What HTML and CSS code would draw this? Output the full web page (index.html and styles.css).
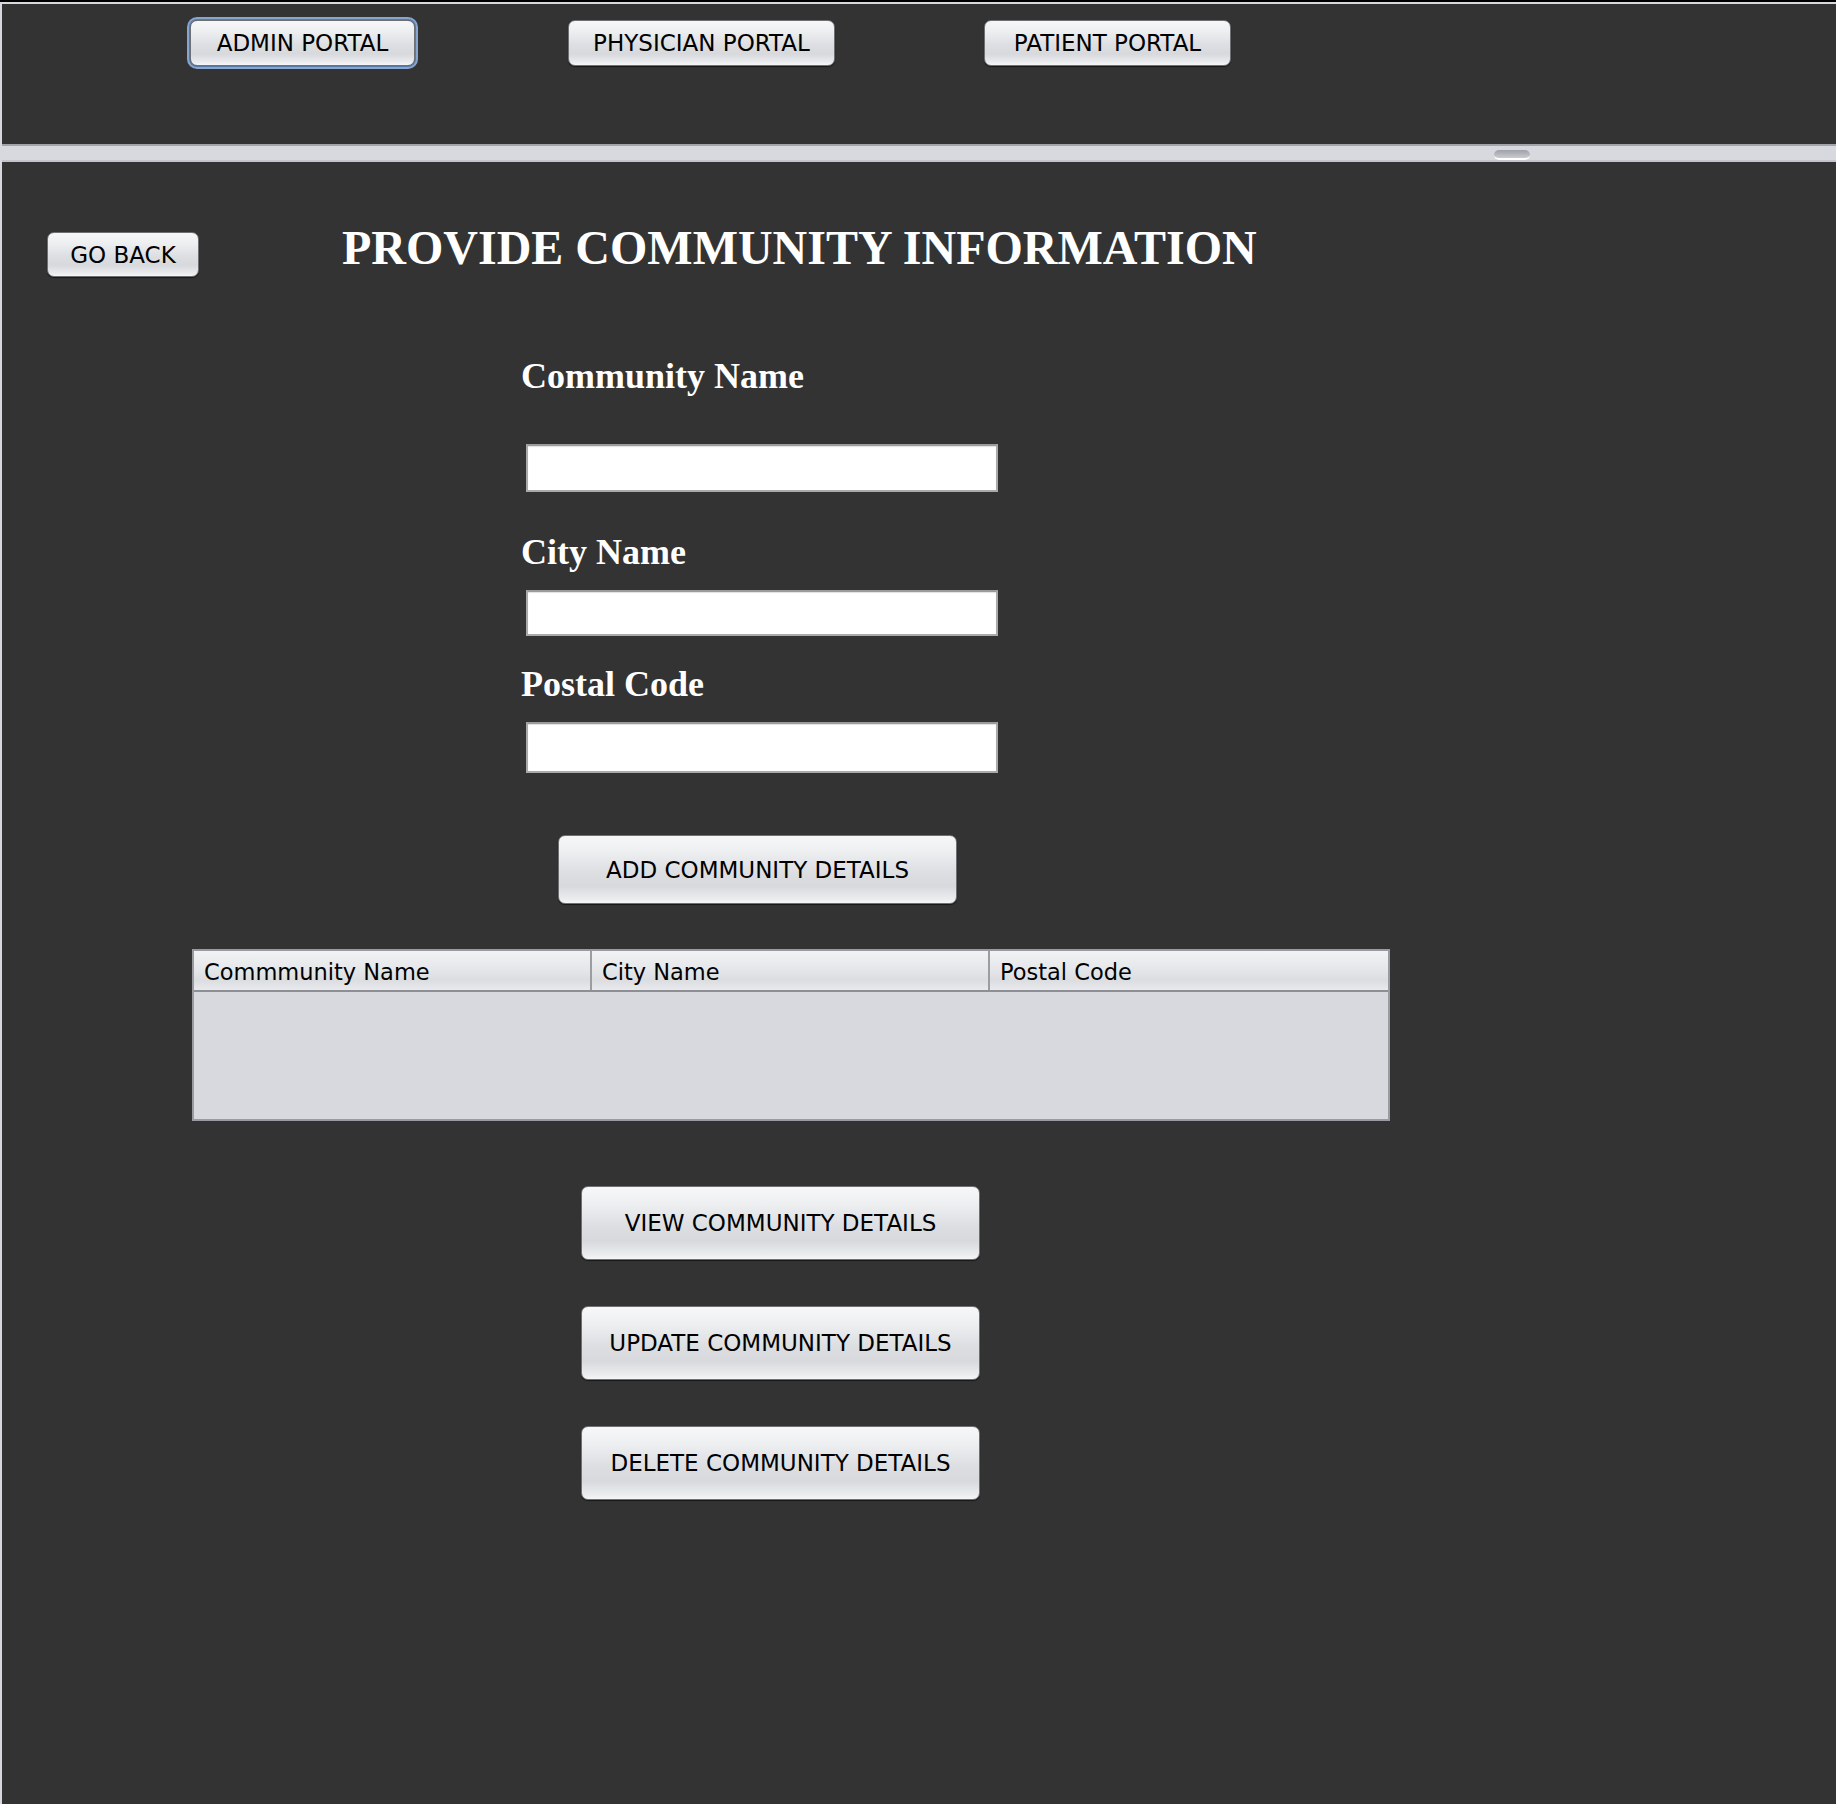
FILE: index.html
```html
<!DOCTYPE html>
<html lang="en">
<head>
<meta charset="utf-8">
<title>Provide Community Information</title>
<link rel="stylesheet" href="styles.css">
</head>
<body>
<div class="frame">
  <div class="top-panel">
    <button class="btn portal-btn admin focused">ADMIN PORTAL</button>
    <button class="btn portal-btn physician">PHYSICIAN PORTAL</button>
    <button class="btn portal-btn patient">PATIENT PORTAL</button>
  </div>
  <div class="divider">
    <span class="divider-handle"></span>
  </div>
  <div class="bottom-panel">
    <div class="title-row">
      <button class="btn back-btn">GO BACK</button>
      <h1 class="page-title">PROVIDE COMMUNITY INFORMATION</h1>
    </div>
    <div class="form">
      <label class="field-label label-community">Community Name</label>
      <input class="field-input input-community" type="text">
      <label class="field-label label-city">City Name</label>
      <input class="field-input input-city" type="text">
      <label class="field-label label-postal">Postal Code</label>
      <input class="field-input input-postal" type="text">
    </div>
    <button class="btn action-btn add-btn">ADD COMMUNITY DETAILS</button>
    <div class="table">
      <div class="table-head">
        <div class="th">Commmunity Name</div>
        <div class="th">City Name</div>
        <div class="th last">Postal Code</div>
      </div>
      <div class="table-body"></div>
    </div>
    <div class="actions">
      <button class="btn action-btn wide">VIEW COMMUNITY DETAILS</button>
      <button class="btn action-btn wide">UPDATE COMMUNITY DETAILS</button>
      <button class="btn action-btn wide">DELETE COMMUNITY DETAILS</button>
    </div>
  </div>
</div>
</body>
</html>
```

FILE: styles.css
```css
html, body {
  margin: 0;
  padding: 0;
  background: #000;
}

.frame {
  margin-top: 2px;
  height: 1802px;
  box-sizing: border-box;
  padding: 2px 0 0 2px;
  background: #d8d9de;
  display: flex;
  flex-direction: column;
}

.btn {
  font-family: "DejaVu Sans", "Liberation Sans", sans-serif;
  font-size: 23px;
  color: #000;
  border: 1px solid #6f7074;
  border-radius: 7px;
  background: linear-gradient(#f7f7f8 0%, #eceef0 25%, #dddee2 55%, #d8d9dd 75%, #eaecee 94%, #f6f7f8 100%);
  box-shadow: 0 1px 1px rgba(0, 0, 0, 0.55);
  padding: 0;
  margin: 0;
  display: flex;
  align-items: center;
  justify-content: center;
  box-sizing: border-box;
  cursor: default;
}

/* top panel */
.top-panel {
  height: 140px;
  flex: none;
  background: #333333;
  display: flex;
  align-items: flex-start;
}

.portal-btn {
  height: 46px;
  margin-top: 16px;
}

.admin {
  width: 225px;
  margin-left: 188px;
}

.focused {
  box-shadow: 0 0 0 1px #5a79a8, 0 0 0 3px #86a6d2;
}

.physician {
  width: 267px;
  margin-left: 153px;
}

.patient {
  width: 247px;
  margin-left: 149px;
}

/* divider */
.divider {
  height: 18px;
  flex: none;
  box-sizing: border-box;
  border-top: 2px solid #a2a4aa;
  border-bottom: 2px solid #c4c5ca;
  background: #d8d9de;
  display: flex;
  align-items: flex-start;
}

.divider-handle {
  width: 36px;
  height: 10px;
  margin-left: 1492px;
  margin-top: 4px;
  box-sizing: border-box;
  border-radius: 5px;
  background: linear-gradient(#9ea1a8, #c9cbd0);
  border-bottom: 2px solid #ffffff;
}

/* bottom panel */
.bottom-panel {
  flex: 1;
  background: #333333;
  display: flex;
  flex-direction: column;
  align-items: flex-start;
}

.title-row {
  display: flex;
  align-items: flex-start;
  margin-top: 62px;
}

.back-btn {
  width: 152px;
  height: 45px;
  margin-left: 45px;
  margin-top: 8px;
}

.page-title {
  margin: 0 0 0 143px;
  font-family: "Liberation Serif", "Times New Roman", serif;
  font-weight: bold;
  font-size: 48px;
  line-height: 48px;
  color: #ffffff;
  white-space: nowrap;
}

.form {
  display: flex;
  flex-direction: column;
  align-items: flex-start;
}

.field-label {
  font-family: "Liberation Serif", "Times New Roman", serif;
  font-weight: bold;
  font-size: 36px;
  line-height: 36px;
  color: #ffffff;
  margin-left: 519px;
}

.label-community { margin-top: 81px; }
.label-city { margin-top: 42px; }
.label-postal { margin-top: 30px; }

.field-input {
  width: 472px;
  margin: 20px 0 0 524px;
  box-sizing: border-box;
  border: 2px solid #aaaaaa;
  border-top-color: #9b9b9b;
  background: #ffffff;
  box-shadow: inset 0 1px 1px rgba(0, 0, 0, 0.12);
  padding: 0;
  outline: none;
}

.input-community { height: 48px; margin-top: 50px; }
.input-city { height: 46px; }
.input-postal { height: 51px; }

.action-btn {
  width: 399px;
}

.add-btn {
  height: 69px;
  margin: 62px 0 0 556px;
}

/* table */
.table {
  width: 1198px;
  margin: 45px 0 0 190px;
  box-sizing: border-box;
  border: 2px solid #9a9ba1;
  background: #d8d9de;
  font-family: "DejaVu Sans", "Liberation Sans", sans-serif;
}

.table-head {
  display: grid;
  grid-template-columns: 1fr 1fr 1fr;
  border-bottom: 2px solid #8e8f94;
  background: linear-gradient(#f1f2f4 0%, #e6e7ea 45%, #dcdde1 75%, #e9eaed 100%);
}

.th {
  font-size: 22.5px;
  line-height: 26px;
  color: #000;
  padding: 8px 0 5px 10px;
  border-right: 2px solid #9c9da2;
}

.th.last {
  border-right: none;
}

.table-body {
  height: 127px;
}

.actions {
  display: flex;
  flex-direction: column;
  gap: 46px;
  margin: 65px 0 0 579px;
}

.wide {
  height: 74px;
}
```
